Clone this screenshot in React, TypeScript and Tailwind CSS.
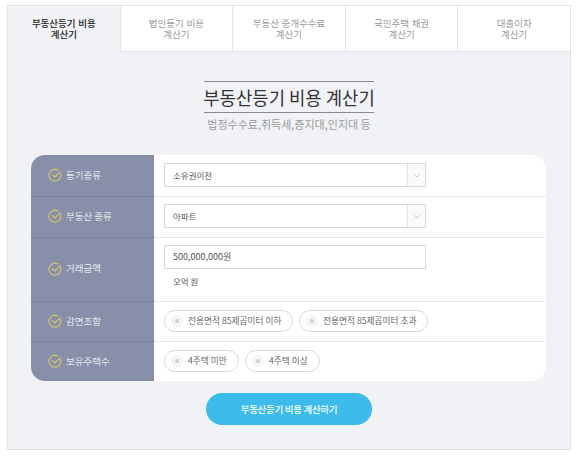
import React from 'react';

const font = '[font-family:"Noto_Sans_CJK_KR","Noto_Sans",sans-serif]';

const tabs = [
  ['부동산등기 비용', '계산기'],
  ['법인등기 비용', '계산기'],
  ['부동산 중개수수료', '계산기'],
  ['국민주택 채권', '계산기'],
  ['대출이자', '계산기'],
];

const CheckIcon = () => (
  <svg width="14" height="14" viewBox="0 0 14 14" fill="none" className="shrink-0">
    <path d="M12.6 5.4A6 6 0 1 1 9.9 2" stroke="#d9c76a" strokeWidth="1.1" strokeLinecap="round" />
    <path d="M4.4 6.6 6.8 9l5.6-5.4" stroke="#d9c76a" strokeWidth="1.1" strokeLinecap="round" strokeLinejoin="round" />
  </svg>
);

const Select = ({ value }: { value: string }) => (
  <div className="flex h-[24px] w-[262px] items-center border border-[#d9d9d9] bg-white">
    <span className="flex-1 pl-[8px] text-[8.5px] text-[#555]">{value}</span>
    <div className="flex h-full w-[18px] items-center justify-center border-l border-[#e2e2e2] bg-[#fafafa]">
      <svg width="8" height="5" viewBox="0 0 8 5" fill="none">
        <path d="M1 1l3 3 3-3" stroke="#b5b5b5" strokeWidth="0.7" />
      </svg>
    </div>
  </div>
);

const Pill = ({ label, width }: { label: string; width: string }) => (
  <div className={`flex h-[22px] items-center rounded-full border border-[#d9d9d9] bg-white pl-[6px] ${width}`}>
    <span className="flex h-[12px] w-[12px] items-center justify-center rounded-full bg-[#f5f5f5]">
      <span className="h-[4px] w-[4px] rounded-full bg-[#cfcfcf]" />
    </span>
    <span className="ml-[5px] text-[8.7px] text-[#666]">{label}</span>
  </div>
);

const Row = ({ label, height, pad, last, children }: { label: string; height: string; pad: string; last?: boolean; children: React.ReactNode }) => (
  <div className={`flex ${height}`}>
    <div className={`flex w-[123px] shrink-0 items-center gap-[4px] bg-[#878fa9] pl-[17px] ${pad} ${last ? '' : 'border-b border-[#7a819b]'}`}>
      <CheckIcon />
      <span className="text-[9.5px] text-[#e6e8ee]">{label}</span>
    </div>
    <div className={`flex flex-1 flex-col justify-center pl-[10px] ${pad} ${last ? '' : 'border-b border-[#e9e9e9]'}`}>{children}</div>
  </div>
);

const App = () => {
  return (
    <div className={`h-[456px] w-[580px] bg-white pl-[7px] pt-[5px] ${font}`}>
      <div className="h-[445px] w-[564px] border border-[#dfe1e5] bg-[#f0f2f6]">
        {/* Tabs */}
        <div className="flex h-[46px] [font-family:'Liberation_Sans','Noto_Sans_CJK_KR',sans-serif]">
          {tabs.map((tab, i) => (
            <div
              key={i}
              className={`flex flex-1 flex-col items-center justify-center text-[9.5px] leading-[11px] ${
                i === 0
                  ? 'font-medium text-[#222]'
                  : 'border-b border-l border-[#e3e4e8] bg-white text-[#9a9a9a]'
              }`}
            >
              <span>{tab[0]}</span>
              <span>{tab[1]}</span>
            </div>
          ))}
        </div>

        {/* Title */}
        <div className="mt-[29px] flex flex-col items-center">
          <h1 className="flex h-[32px] w-[170px] items-center justify-center whitespace-nowrap border-y border-[#8a8a8a] text-[17.8px] font-normal text-[#333]">
            부동산등기 비용 계산기
          </h1>
          <p className="mt-[3px] text-[11px] leading-[16px] text-[#9a9a9a]">법정수수료,취득세,증지대,인지대 등</p>
        </div>

        {/* Form */}
        <div className="ml-[23px] mt-[23px] w-[515px] overflow-hidden rounded-[14px] bg-white">
          <Row label="등기종류" height="h-[42px]" pad="pb-[1px]">
            <Select value="소유권이전" />
          </Row>
          <Row label="부동산 종류" height="h-[41px]" pad="pb-[2px]">
            <Select value="아파트" />
          </Row>
          <Row label="거래금액" height="h-[64px]" pad="pb-[2px]">
            <div className="flex h-[24px] w-[262px] items-center border border-[#d9d9d9] pl-[8px] text-[9px] text-[#555]">
              500,000,000원
            </div>
            <div className="mt-[5px] mb-[4px] pl-[9px] text-[8.5px] leading-[14px] text-[#555]">오억 원</div>
          </Row>
          <Row label="감면조항" height="h-[40px]" pad="pb-[1px]">
            <div className="flex gap-[6px]">
              <Pill label="전용면적 85제곱미터 이하" width="w-[129px]" />
              <Pill label="전용면적 85제곱미터 초과" width="w-[129px]" />
            </div>
          </Row>
          <Row label="보유주택수" height="h-[39px]" pad="pb-[1px]" last>
            <div className="flex gap-[6px]">
              <Pill label="4주택 미만" width="w-[75px]" />
              <Pill label="4주택 이상" width="w-[75px]" />
            </div>
          </Row>
        </div>

        {/* Submit */}
        <div className="mt-[12px] flex justify-center">
          <button className="h-[32px] w-[166px] rounded-full bg-[#3dbbea] text-[9.5px] font-medium tracking-[-0.3px] text-white">
            부동산등기 비용 계산하기
          </button>
        </div>
      </div>
    </div>
  );
};

export default App;
